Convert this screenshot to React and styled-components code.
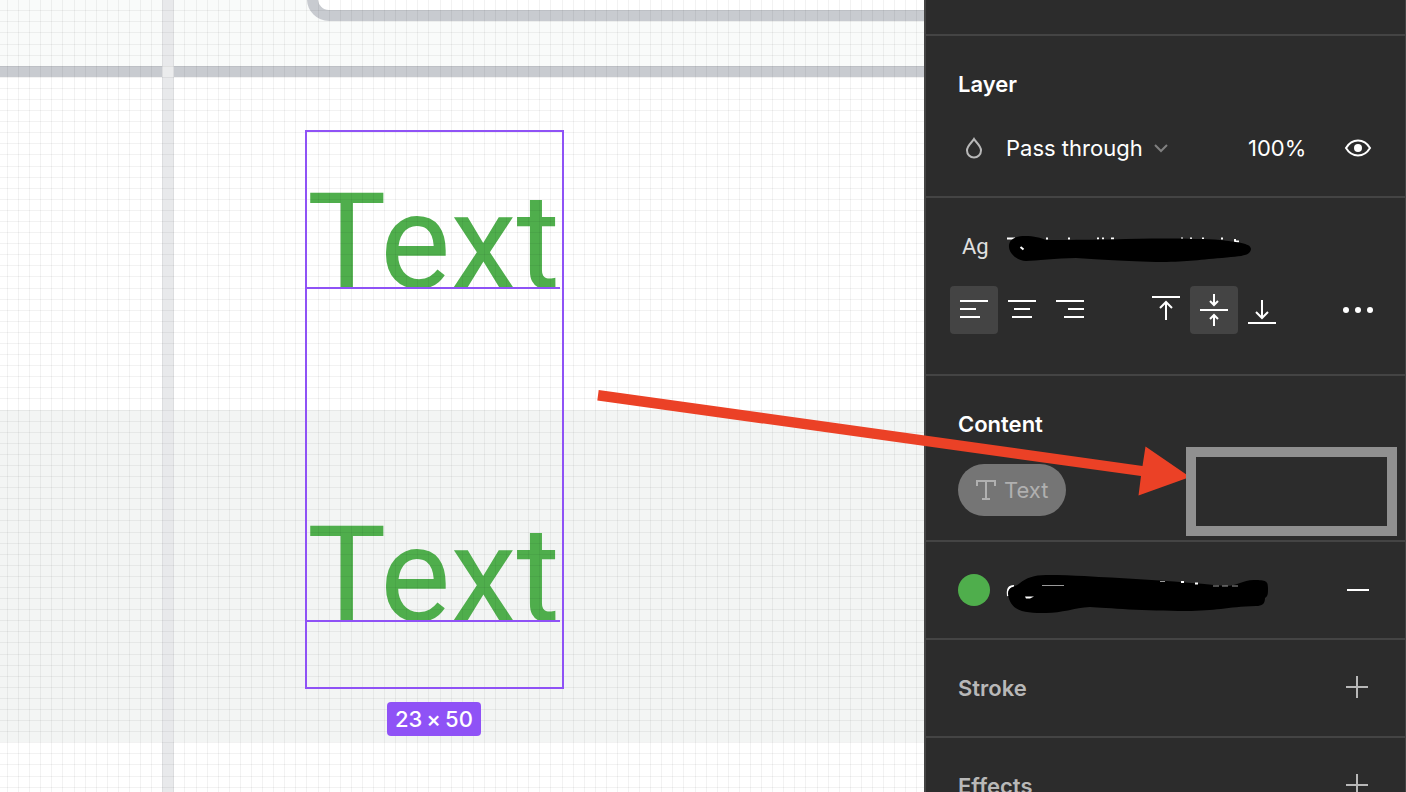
import React from 'react';
import styled, { createGlobalStyle } from 'styled-components';

const theme = {
  panel: '#2c2c2c',
  line: '#444444',
  text: '#ffffff',
  muted: '#b8b8b8',
  purple: '#8f52f6',
  green: '#4fae4c',
  red: '#eb4126',
};

const GlobalStyle = createGlobalStyle`
  * {
    box-sizing: border-box;
  }

  body {
    margin: 0;
    background-color: ${theme.panel};
    font-family: Inter, 'Liberation Sans', sans-serif;
    font-size: 22px;
    line-height: 32px;
  }

  button,
  select,
  input {
    margin: 0;
    padding: 0;
    border: none;
    background: none;
    color: inherit;
    font: inherit;
  }
`;

const Editor = styled.div`
  position: relative;
  display: flex;
  height: 100vh;
  overflow: hidden;
`;

const Canvas = styled.main`
  position: relative;
  flex: 1;
  min-width: 0;
  overflow: hidden;
  background-color: #ffffff;
`;

const Band = styled.div`
  position: absolute;
  left: 0;
  right: 0;
  top: ${({ $top }) => $top}px;
  height: ${({ $height }) => $height}px;
  background-color: ${({ $color }) => $color};
`;

const Guide = styled.div`
  position: absolute;
  top: 0;
  bottom: 0;
  left: 162px;
  width: 12px;
  background-color: #e8e9eb;
`;

const GuideCrossing = styled.div`
  position: absolute;
  top: 66px;
  left: 163px;
  width: 10px;
  height: 11px;
  background-color: #ebeced;
`;

const Frame = styled.div`
  position: absolute;
  top: -80px;
  left: 307px;
  right: -40px;
  height: 101px;
  border: 11px solid #c8cbd0;
  border-radius: 22px;
  background-color: #ffffff;
`;

const TextLayer = styled.div`
  position: absolute;
  top: 76px;
  left: 307px;
  color: ${theme.green};
  font-family: Roboto, 'Liberation Sans', sans-serif;
  font-size: 133px;
  line-height: 333px;
  white-space: pre;
`;

const GridLines = styled.svg`
  position: absolute;
  inset: 0;
  width: 100%;
  height: 100%;
`;

const Selection = styled.div`
  position: absolute;
  top: 130px;
  left: 305px;
  width: 259px;
  height: 559px;
  border: 2px solid ${theme.purple};
`;

const Baseline = styled.div`
  position: absolute;
  top: ${({ $top }) => $top}px;
  left: 0;
  width: 253px;
  height: 2px;
  background-color: ${theme.purple};
`;

const SizeBadge = styled.div`
  position: absolute;
  top: 702px;
  left: 387px;
  display: flex;
  gap: 4px;
  padding: 1px 8px;
  border-radius: 4px;
  background-color: ${theme.purple};
  color: ${theme.text};
  font-weight: 500;
`;

const Panel = styled.aside`
  width: 482px;
  flex-shrink: 0;
  border-left: 2px solid ${theme.line};
  border-right: 1px solid ${theme.line};
  background-color: ${theme.panel};
  color: ${theme.text};
`;

const PanelTop = styled.div`
  height: 34px;
`;

const Section = styled.section`
  padding: ${({ $padding }) => $padding || '24px 23px 24px 32px'};
  border-top: 2px solid ${theme.line};
`;

const Title = styled.h2`
  margin: 0;
  color: ${({ $muted }) => ($muted ? theme.muted : theme.text)};
  font-size: 22px;
  font-weight: 600;
`;

const Row = styled.div`
  display: flex;
  align-items: center;
`;

const LayerRow = styled(Row)`
  margin-top: 24px;
  height: 48px;
`;

const IconCell = styled.span`
  display: flex;
  justify-content: center;
  width: 32px;
  margin-right: 16px;
`;

const BlendMode = styled.label`
  display: flex;
  align-items: center;
`;

const BlendSelect = styled.select`
  appearance: none;
  outline: none;
  field-sizing: content;
`;

const Chevron = styled.svg`
  margin-left: 11px;
`;

const Opacity = styled.input`
  width: 62px;
  margin-left: auto;
  outline: none;
`;

const IconButton = styled.button`
  display: flex;
  align-items: center;
  justify-content: center;
  width: 48px;
  height: 48px;
  border-radius: 4px;
  background-color: ${({ $active }) => ($active ? '#444444' : 'transparent')};
  color: ${({ $muted }) => ($muted ? theme.muted : theme.text)};
  cursor: pointer;
`;

const VisibilityButton = styled(IconButton)`
  margin-left: 24px;
`;

const StyleButton = styled.button`
  display: flex;
  align-items: center;
  cursor: pointer;
`;

const FontPreview = styled.span`
  width: 32px;
  margin-right: 16px;
  padding-left: 4px;
  color: #e0e0e0;
  font-family: Roboto, 'Liberation Sans', sans-serif;
  text-align: left;
`;

const AlignRow = styled(Row)`
  justify-content: space-between;
  margin: 23px 0 0 -8px;
`;

const Group = styled.div`
  display: flex;
`;

const TextProperty = styled.button`
  display: flex;
  align-items: center;
  gap: 8px;
  height: 52px;
  margin-top: 24px;
  padding: 0 18px;
  border-radius: 26px;
  background-color: #757575;
  color: #b0b0b0;
`;

const Swatch = styled.span`
  width: 32px;
  height: 32px;
  margin-right: 16px;
  border-radius: 50%;
  background-color: ${theme.green};
`;

const SpacedRow = styled(Row)`
  justify-content: space-between;
`;

const Callout = styled.div`
  position: absolute;
  top: 447px;
  right: 9px;
  width: 211px;
  height: 89px;
  border: 10px solid #909090;
`;

const Arrow = styled.svg`
  position: absolute;
  top: 380px;
  right: 206px;
  pointer-events: none;
`;

const PITCH = 11.09;
const COUNT = 260;
const lines = Array.from({ length: COUNT }, (_, i) => i);

const PixelGrid = () => (
  <GridLines aria-hidden="true" fill="#000" fillOpacity="0.05" shapeRendering="crispEdges">
    {lines.map((i) => (
      <rect key={`v${i}`} x={Math.floor(7.5 + i * PITCH)} y="0" width="1" height="100%" />
    ))}
    {lines.map((i) => (
      <rect key={`h${i}`} x="0" y={Math.floor(10.8 + i * PITCH)} width="100%" height="1" />
    ))}
  </GridLines>
);

const Icon = ({ size = 48, children }) => (
  <svg
    width={size}
    height={size}
    viewBox={`0 0 ${size} ${size}`}
    fill="none"
    stroke="currentColor"
    strokeWidth="2"
    aria-hidden="true"
  >
    {children}
  </svg>
);

const icons = {
  left: <path d="M10 15h28M10 23h16M10 31h20" />,
  center: <path d="M10 15h28M16 23h16M14 31h20" />,
  right: <path d="M10 15h28M22 23h16M18 31h20" />,
  top: <path d="M10 11h28M24 34V16M18 22l6-6 6 6" />,
  middle: <path d="M10 24h28M24 8v11M20 15l4 4 4-4M24 40V29M20 33l4-4 4 4" />,
  bottom: <path d="M10 37h28M24 14v18M18 26l6 6 6-6" />,
};

const AlignButton = ({ name, label, active }) => (
  <IconButton type="button" aria-label={label} aria-pressed={!!active} $active={active}>
    <Icon>{icons[name]}</Icon>
  </IconButton>
);

const PlusIcon = () => (
  <Icon>
    <path d="M12 23h22M23 12v22" />
  </Icon>
);

const FontScribble = () => (
  <svg width="250" height="32" viewBox="0 0 250 32" aria-hidden="true">
    <path
      d="M1 7.500h8M40 7.500h2M62 7.500h2M91 7.500h2M96 7.500h2M105 7.500h3M175 7.500h2M184 7.500h2M196 7.500h2M215 7.500h2M229 8v3M228 10.500h5"
      stroke="#fff"
      strokeWidth="2"
    />
    <path
      d="M3 14C4 8 10 5 19 5C28 5 35 7 40 9C70 9 92 8.500 106 8.500C150 7 190 7.500 214 9C230 11 245 12 245 18C244 25 236 25 216 27C190 29 180 31 150 31C110 30 90 28 70 27C50 27 30 30 20 30C10 29 2 22 3 14Z"
      fill="#000"
    />
    <path d="M14.500 16l3 2.500" stroke="#fff" strokeWidth="2" />
  </svg>
);

const FillScribble = () => (
  <svg width="270" height="48" viewBox="0 0 270 48" aria-hidden="true">
    <path d="M8 20C3 20 1 23 2 30" fill="none" stroke="#fff" strokeWidth="2" />
    <path
      d="M2 28C2 20 9 22 14 17C20 12 28 9 40 9C70 9 90 11 105 11.500C150 14 190 17 220 20C232 20 236 14 248 14C260 14 262 15 262 22C262 28 262 30 259 32C259 38 256 40 250 40C220 41 210 45 180 45C140 45 100 42 84 41C68 42 56 47 40 47C20 47 4 46 2 28Z"
      fill="#000"
    />
    <path d="M19 30.500h9l-4 2h-4ZM175 15h3v2h-3ZM189 16.500h3v2h-3Z" fill="#fff" />
    <path d="M36 19.500h22M154 15.500h5M207 20h6M216 20h6M226 20h6" stroke="#999" fill="none" />
  </svg>
);

const App = () => (
  <>
    <GlobalStyle />
    <Editor>
      <Canvas>
        <Band $top={0} $height={66} $color="#f9fbfa" />
        <Band $top={410} $height={332} $color="#f3f5f4" />
        <Frame />
        <Band $top={66} $height={11} $color="#c8cbd0" />
        <Guide />
        <GuideCrossing />
        <TextLayer>{'Text\nText'}</TextLayer>
        <PixelGrid />
        <Selection>
          <Baseline $top={155} />
          <Baseline $top={488} />
        </Selection>
        <SizeBadge>
          <span>23</span>
          <span>×</span>
          <span>50</span>
        </SizeBadge>
      </Canvas>

      <Panel>
        <PanelTop />
        <Section $padding="32px 23px 24px 32px">
          <Title>Layer</Title>
          <LayerRow>
            <BlendMode>
              <IconCell>
                <svg width="20" height="24" viewBox="0 0 20 24" fill="none" aria-hidden="true">
                  <path
                    d="M10 3C8 6.500 3 9.500 3 14.500a7 7 0 0 0 14 0C17 9.500 12 6.500 10 3Z"
                    stroke="#b8b8b8"
                    strokeWidth="2"
                  />
                </svg>
              </IconCell>
              <BlendSelect aria-label="Blend mode" defaultValue="pass">
                <option value="pass">Pass through</option>
              </BlendSelect>
              <Chevron width="14" height="10" viewBox="0 0 14 10" fill="none" aria-hidden="true">
                <path d="M1 2l6 6 6-6" stroke="#808080" strokeWidth="2" />
              </Chevron>
            </BlendMode>
            <Opacity aria-label="Opacity" defaultValue="100%" />
            <VisibilityButton type="button" aria-label="Toggle visibility">
              <Icon>
                <path d="M12 24C18 14 30 14 36 24C30 34 18 34 12 24Z" />
                <circle cx="24" cy="24" r="4" fill="currentColor" stroke="none" />
              </Icon>
            </VisibilityButton>
          </LayerRow>
        </Section>

        <Section $padding="33px 23px 40px 32px">
          <StyleButton type="button" aria-label="Text style">
            <FontPreview>Ag</FontPreview>
            <FontScribble />
          </StyleButton>
          <AlignRow>
            <Group>
              <AlignButton name="left" label="Align left" active />
              <AlignButton name="center" label="Align center" />
              <AlignButton name="right" label="Align right" />
            </Group>
            <Group>
              <AlignButton name="top" label="Align top" />
              <AlignButton name="middle" label="Align middle" active />
              <AlignButton name="bottom" label="Align bottom" />
            </Group>
            <IconButton type="button" aria-label="Type settings">
              <svg width="32" height="8" viewBox="0 0 32 8" fill="currentColor" aria-hidden="true">
                <circle cx="4" cy="4" r="3" />
                <circle cx="16" cy="4" r="3" />
                <circle cx="28" cy="4" r="3" />
              </svg>
            </IconButton>
          </AlignRow>
        </Section>

        <Section $padding="32px 23px 24px 32px">
          <Title>Content</Title>
          <TextProperty type="button">
            <svg
              width="20"
              height="20"
              viewBox="0 0 20 20"
              fill="none"
              stroke="currentColor"
              strokeWidth="2"
              aria-hidden="true"
            >
              <path d="M1 6V1h18v5M10 1v18M6 19h8" />
            </svg>
            Text
          </TextProperty>
        </Section>

        <Section>
          <SpacedRow>
            <StyleButton type="button" aria-label="Fill color">
              <Swatch />
              <FillScribble />
            </StyleButton>
            <IconButton type="button" aria-label="Remove fill">
              <Icon>
                <path d="M13 24h22" />
              </Icon>
            </IconButton>
          </SpacedRow>
        </Section>

        <Section>
          <SpacedRow>
            <Title $muted>Stroke</Title>
            <IconButton type="button" aria-label="Add stroke" $muted>
              <PlusIcon />
            </IconButton>
          </SpacedRow>
        </Section>

        <Section>
          <SpacedRow>
            <Title $muted>Effects</Title>
            <IconButton type="button" aria-label="Add effect" $muted>
              <PlusIcon />
            </IconButton>
          </SpacedRow>
        </Section>
      </Panel>

      <Arrow width="606" height="120" viewBox="0 0 606 120" aria-hidden="true">
        <path
          d="M4.700 10L548.500 86L551.500 66.500L596 97L544.500 115.500L547 96L3.300 20.500Z"
          fill={theme.red}
        />
      </Arrow>
      <Callout />
    </Editor>
  </>
);

export default App;
